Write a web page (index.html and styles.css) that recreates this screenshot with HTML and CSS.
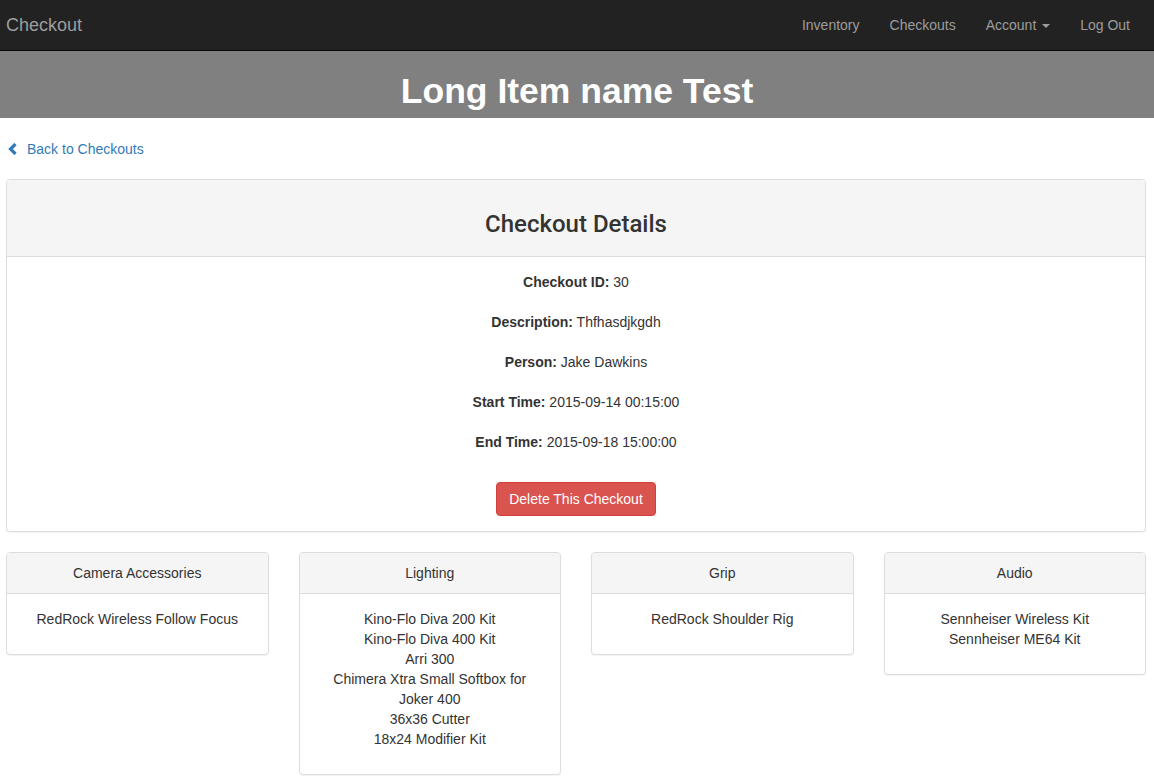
FILE: index.html
```html
<!DOCTYPE html>
<html>
<head>
<meta charset="utf-8">
<title>Checkout</title>
<link rel="stylesheet" href="styles.css">
</head>
<body>
<nav class="navbar">
  <a class="brand" href="#">Checkout</a>
  <ul class="nav">
    <li><a href="#">Inventory</a></li>
    <li><a href="#">Checkouts</a></li>
    <li><a href="#">Account <span class="caret"></span></a></li>
    <li><a href="#">Log Out</a></li>
  </ul>
</nav>
<header class="banner">
  <h1>Long Item name Test</h1>
</header>
<main class="content">
  <p class="back"><a href="#"><svg class="chev" width="10" height="12" viewBox="0 0 10 12"><path d="M7.5 1 L2.5 6 L7.5 11" fill="none" stroke="#337ab7" stroke-width="3.2"/></svg>Back to Checkouts</a></p>
  <section class="panel main-panel">
    <div class="panel-heading"><h3>Checkout Details</h3></div>
    <div class="panel-body">
      <p><b>Checkout ID:</b> 30</p>
      <p><b>Description:</b> Thfhasdjkgdh</p>
      <p><b>Person:</b> Jake Dawkins</p>
      <p><b>Start Time:</b> 2015-09-14 00:15:00</p>
      <p><b>End Time:</b> 2015-09-18 15:00:00</p>
      <div class="actions"><button class="btn-danger">Delete This Checkout</button></div>
    </div>
  </section>
  <div class="grid">
    <section class="panel small">
      <div class="panel-heading">Camera Accessories</div>
      <div class="panel-body"><p>RedRock Wireless Follow Focus</p></div>
    </section>
    <section class="panel small">
      <div class="panel-heading">Lighting</div>
      <div class="panel-body"><p>Kino-Flo Diva 200 Kit<br>Kino-Flo Diva 400 Kit<br>Arri 300<br>Chimera Xtra Small Softbox for Joker 400<br>36x36 Cutter<br>18x24 Modifier Kit</p></div>
    </section>
    <section class="panel small">
      <div class="panel-heading">Grip</div>
      <div class="panel-body"><p>RedRock Shoulder Rig</p></div>
    </section>
    <section class="panel small">
      <div class="panel-heading">Audio</div>
      <div class="panel-body"><p>Sennheiser Wireless Kit<br>Sennheiser ME64 Kit</p></div>
    </section>
  </div>
</main>
</body>
</html>
```
FILE: styles.css
```css
* { box-sizing: border-box; }
html, body { margin: 0; padding: 0; }
body {
  font-family: "Liberation Sans", Arial, sans-serif;
  font-size: 14px;
  line-height: 20px;
  color: #333;
  background: #fff;
}
a { text-decoration: none; }

.navbar {
  height: 51px;
  background: #222;
  border-bottom: 1px solid #080808;
  display: flex;
  align-items: center;
  justify-content: space-between;
  padding: 0 9px 0 6px;
}
.brand {
  color: #9d9d9d;
  font-size: 18px;
  line-height: 20px;
}
.nav {
  list-style: none;
  margin: 0;
  padding: 0;
  display: flex;
}
.nav a {
  display: block;
  padding: 15px 15px;
  color: #9d9d9d;
  line-height: 20px;
}
.caret {
  display: inline-block;
  width: 0;
  height: 0;
  margin-left: 2px;
  vertical-align: middle;
  border-top: 4px solid #9d9d9d;
  border-left: 4px solid transparent;
  border-right: 4px solid transparent;
}

.banner {
  background: #808080;
  height: 67px;
  text-align: center;
}
.banner h1 {
  margin: 0;
  padding-top: 20px;
  font-size: 35.5px;
  line-height: 40px;
  font-weight: bold;
  color: #fff;
}

.content { padding: 0 8px 30px 6px; }
.back { margin: 21px 0 19px 2px; }
.back a { color: #337ab7; display: inline-flex; align-items: center; }
.chev { margin-right: 9px; }

.panel {
  background: #fff;
  border: 1px solid #ddd;
  border-radius: 4px;
  box-shadow: 0 1px 1px rgba(0,0,0,.05);
  overflow: hidden;
}
.panel-heading {
  background: #f5f5f5;
  border-bottom: 1px solid #ddd;
  padding: 10px 15px;
  text-align: center;
}
.panel-body {
  padding: 15px;
  text-align: center;
}
.main-panel h3 {
  margin: 21px 0 9px;
  font-family: Roboto, "Liberation Sans", sans-serif;
  font-size: 24px;
  line-height: 26px;
  font-weight: 500;
  color: #333;
}
.main-panel .panel-body p { margin: 0 0 20px; }
.actions { padding-top: 10px; }
.btn-danger {
  font-family: inherit;
  font-size: 14px;
  line-height: 20px;
  padding: 6px 12px;
  color: #fff;
  background: #d9534f;
  border: 1px solid #d43f3a;
  border-radius: 4px;
}

.grid {
  margin-top: 20px;
  display: grid;
  grid-template-columns: repeat(4, 1fr);
  gap: 30px;
  align-items: start;
}
.small .panel-body p { margin: 0 0 10px; }
```
